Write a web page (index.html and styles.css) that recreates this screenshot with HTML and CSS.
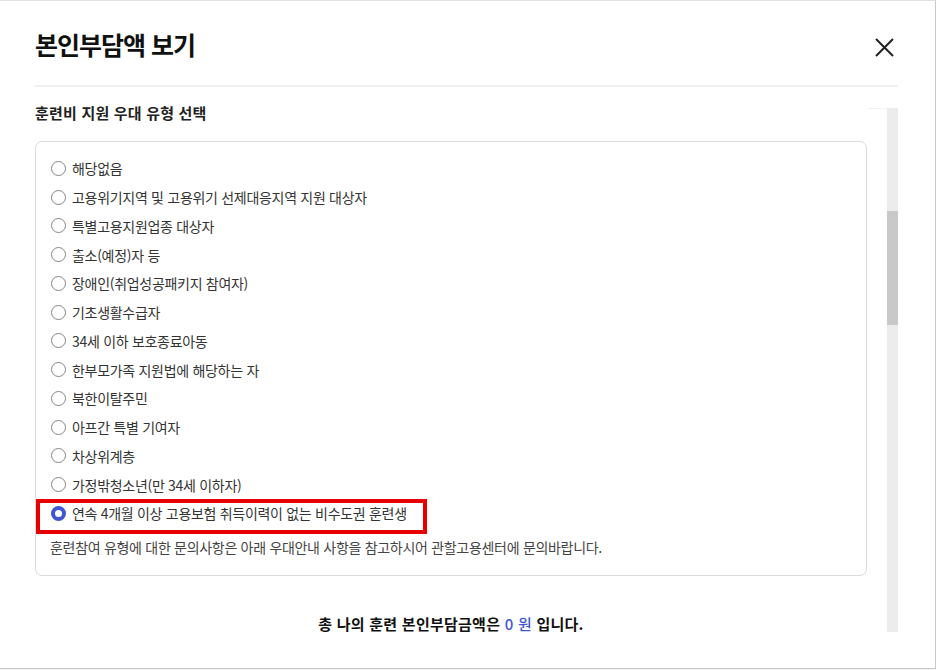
FILE: index.html
```html
<!DOCTYPE html>
<html lang="ko">
<head>
<meta charset="utf-8">
<title>본인부담액 보기</title>
<link rel="stylesheet" href="styles.css">
</head>
<body>
<div class="modal">
  <header class="modal-head">
    <h2 class="modal-title">본인부담액 보기</h2>
    <button class="close" type="button" aria-label="닫기">
      <svg width="19" height="19" viewBox="0 0 19 19"><path d="M1 1L18 18M18 1L1 18" stroke="#222" stroke-width="2" fill="none"/></svg>
    </button>
  </header>
  <div class="modal-body">
    <div class="content">
      <h3 class="section-title">훈련비 지원 우대 유형 선택</h3>
      <div class="box">
        <ul class="options">
          <li class="option"><span class="radio"></span><span>해당없음</span></li>
          <li class="option"><span class="radio"></span><span>고용위기지역 및 고용위기 선제대응지역 지원 대상자</span></li>
          <li class="option"><span class="radio"></span><span>특별고용지원업종 대상자</span></li>
          <li class="option"><span class="radio"></span><span>출소(예정)자 등</span></li>
          <li class="option"><span class="radio"></span><span>장애인(취업성공패키지 참여자)</span></li>
          <li class="option"><span class="radio"></span><span>기초생활수급자</span></li>
          <li class="option"><span class="radio"></span><span>34세 이하 보호종료아동</span></li>
          <li class="option"><span class="radio"></span><span>한부모가족 지원법에 해당하는 자</span></li>
          <li class="option"><span class="radio"></span><span>북한이탈주민</span></li>
          <li class="option"><span class="radio"></span><span>아프간 특별 기여자</span></li>
          <li class="option"><span class="radio"></span><span>차상위계층</span></li>
          <li class="option"><span class="radio"></span><span>가정밖청소년(만 34세 이하자)</span></li>
          <li class="option selected"><span class="radio checked"></span><span>연속 4개월 이상 고용보험 취득이력이 없는 비수도권 훈련생</span></li>
        </ul>
        <p class="note">훈련참여 유형에 대한 문의사항은 아래 우대안내 사항을 참고하시어 관할고용센터에 문의바랍니다.</p>
      </div>
      <p class="total">총 나의 훈련 본인부담금액은 <span class="amount">0 원</span> 입니다.</p>
    </div>
    <div class="scroll-col">
      <div class="gutter"></div>
      <div class="track"><div class="thumb"></div></div>
    </div>
  </div>
</div>
</body>
</html>
```
FILE: styles.css
```css
*, *::before, *::after { box-sizing: border-box; }
html, body { margin: 0; padding: 0; }
body {
  background: #f4f4f4;
  font-family: "Noto Sans CJK KR", "Noto Sans", sans-serif;
  color: #333;
  width: 936px;
  height: 670px;
  overflow: hidden;
}
.modal {
  width: 936px;
  height: 669px;
  background: #fff;
  border-top: 1px solid #e2e2e2;
  border-right: 1px solid #c8c8c8;
  border-bottom: 1px solid #c8c8c8;
  padding: 0 37px 0 35px;
}
.modal-head {
  display: flex;
  align-items: center;
  justify-content: space-between;
  height: 86px;
  border-bottom: 2px solid #efefef;
}
.modal-title {
  margin: 0;
  font-size: 25px;
  letter-spacing: -1px;
  font-weight: 700;
  color: #111;
  line-height: 36px;
  padding-top: 1px;
}
.close {
  background: none;
  border: 0;
  padding: 0;
  margin: 8px 4px 0 0;
  width: 19px;
  height: 19px;
  display: flex;
  cursor: pointer;
}
.modal-body {
  display: flex;
}
.content {
  flex: 1;
  padding-top: 14px;
}
.section-title {
  margin: 0;
  font-size: 15px;
  letter-spacing: 0.2px;
  font-weight: 700;
  color: #222;
  line-height: 24px;
}
.box {
  margin-top: 16px;
  border: 1px solid #dcdcdc;
  border-radius: 7px;
  padding: 12px 14px 18px 14px;
}
.options {
  list-style: none;
  margin: 0;
  padding: 0;
}
.option {
  display: flex;
  align-items: center;
  height: 28.75px;
  font-size: 14px;
  letter-spacing: -0.3px;
  color: #333;
}
.radio {
  width: 15px;
  height: 15px;
  border-radius: 50%;
  border: 1px solid #858585;
  background: #fff;
  margin: 0 6px 0 1px;
  flex: none;
}
.radio.checked {
  border: 4px solid #3f57d3;
}
.selected {
  position: relative;
}
.selected::after {
  content: "";
  position: absolute;
  left: -14px;
  top: 0;
  width: 391px;
  height: 35px;
  border: 4px solid #e60000;
}
.note {
  margin: 9px 0 0 0;
  font-size: 14px;
  letter-spacing: -0.3px;
  line-height: 20px;
  color: #444;
}
.total {
  margin: 37px 0 0 0;
  text-align: center;
  font-size: 15px;
  letter-spacing: 0.25px;
  font-weight: 700;
  color: #111;
}
.amount {
  color: #3f57d3;
  font-weight: 500;
}
.scroll-col {
  display: flex;
  width: 31px;
  margin-top: 21px;
  height: 524px;
}
.gutter {
  flex: 1;
  border-top: 1px solid #f3f3f3;
}
.track {
  width: 11px;
  background: #ececec;
}
.thumb {
  margin-top: 103px;
  height: 114px;
  background: #c9c9c9;
}
```
